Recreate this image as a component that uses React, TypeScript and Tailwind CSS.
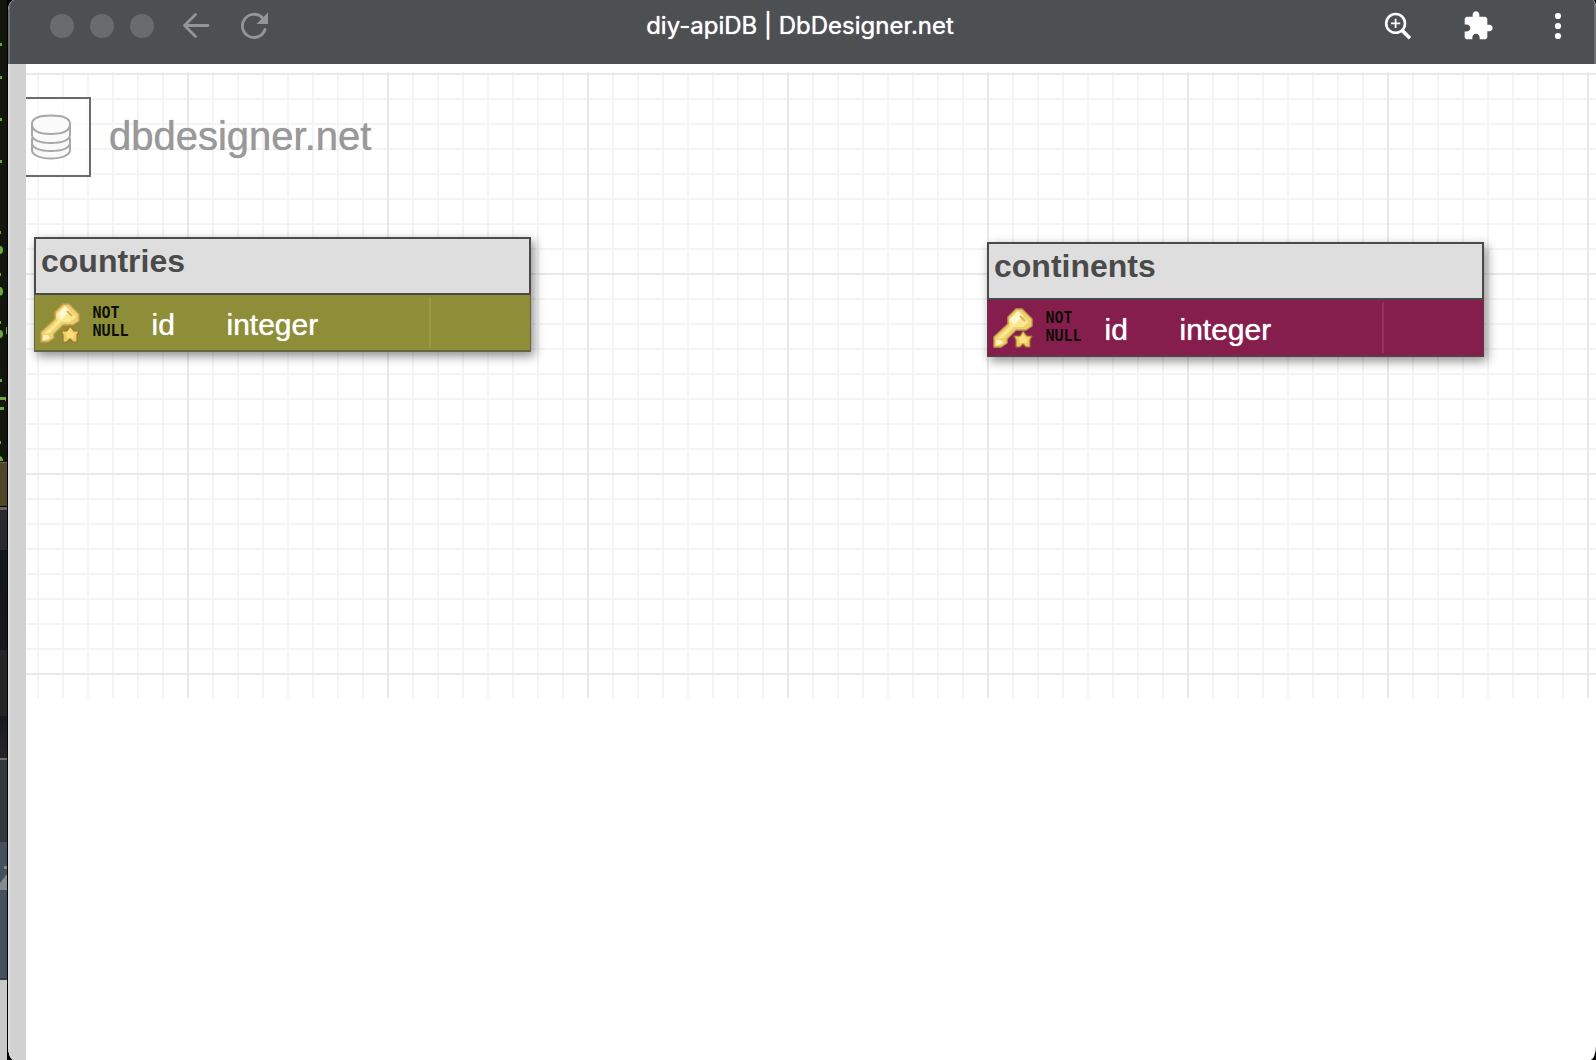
import React from "react";

const SANS = "font-['Liberation_Sans',Arial,sans-serif]";

function BackIcon() {
  return (
    <svg className="size-7" viewBox="0 0 28 28" fill="none" stroke="#939597" strokeWidth="2.8" strokeLinecap="round" aria-hidden="true">
      <path d="M2.5 13.5H26M13.5 2.5L2.5 13.5L13.5 24.5" strokeLinejoin="round" />
    </svg>
  );
}

function ReloadIcon() {
  return (
    <svg className="size-7" viewBox="0 0 28 28" aria-hidden="true">
      <path d="M25 17.500A11.600 11.600 0 1 1 22.500 6" fill="none" stroke="#939597" strokeWidth="2.8" strokeLinecap="round" />
      <path d="M28 0.500V12H16.500Z" fill="#939597" />
    </svg>
  );
}

function ZoomIcon() {
  return (
    <svg className="size-7" viewBox="0 0 28 28" fill="none" stroke="#fff" aria-hidden="true">
      <circle cx="11.6" cy="11.4" r="9.4" strokeWidth="2.6" />
      <path d="M11.600 6.800V16M7 11.400H16.200" strokeWidth="1.8" />
      <path d="M18.300 18.600L26 26.200" strokeWidth="3.6" />
    </svg>
  );
}

function PuzzleIcon() {
  return (
    <svg className="size-8" viewBox="0 0 24 24" fill="#fff" aria-hidden="true">
      <path d="M20.5 11H19V7c0-1.1-.9-2-2-2h-4V3.5C13 2.12 11.88 1 10.5 1S8 2.12 8 3.5V5H4c-1.1 0-1.99.9-1.99 2v3.8H3.5c1.49 0 2.7 1.21 2.7 2.7s-1.21 2.7-2.7 2.7H2V20c0 1.1.9 2 2 2h3.8v-1.5c0-1.49 1.21-2.7 2.7-2.7 1.49 0 2.7 1.21 2.7 2.7V22H17c1.1 0 2-.9 2-2v-4h1.5c1.38 0 2.5-1.12 2.5-2.5S21.88 11 20.5 11z" />
    </svg>
  );
}

function MenuIcon() {
  return (
    <svg className="h-7 w-2" viewBox="0 0 8 28" fill="#fff" aria-hidden="true">
      <circle cx="4" cy="4" r="3.1" />
      <circle cx="4" cy="14" r="3.1" />
      <circle cx="4" cy="24" r="3.1" />
    </svg>
  );
}

function KeyIcon() {
  return (
    <svg className="size-10" viewBox="0 0 40 40" strokeLinejoin="round" aria-hidden="true">
      <path d="M1 29L15 16V9L23 1H29L39 11V18L33 22L23 22L14 31V35L8 39H1Z" fill="#ecd26c" stroke="#c79a50" strokeWidth="1.4" />
      <path d="M16 12L25 3L36 14L30 19L21 19L10 30L4 31L17 18Z" fill="#f9e88f" />
      <path d="M17 11L25 3L30 8L21 17Z" fill="#fdf6cf" />
      <path d="M3 32H8L10 35L5 37H3Z" fill="#fff3b8" />
      <path d="M27 8L32 13" stroke="#dda95a" strokeWidth="2" />
      <path d="M30 23L34 28H39L37 32V39H33L30 36L27 39H23V32L21 28H27Z" fill="#f0cb62" stroke="#9a7530" strokeWidth="1.2" />
      <path d="M30 26L33 30H35L33 35H27L26 30Z" fill="#ffdf7c" />
    </svg>
  );
}

function DatabaseIcon() {
  return (
    <svg className="h-[46px] w-[42px] shrink-0" viewBox="0 0 42 46" fill="#fafafa" stroke="#a8a8a8" strokeWidth="2" aria-hidden="true">
      <path d="M2 30V36C2 41 10 44.500 21 44.500S40 41 40 36V30" />
      <path d="M2 24V29C2 34 10 37 21 37S40 34 40 29V24" />
      <path d="M2 10V21C2 26 10 29 21 29S40 26 40 21V10" />
      <path d="M2 10C2 17 10 20 21 20S40 17 40 10C40 4 32 1.500 21 1.500S2 4 2 10Z" />
    </svg>
  );
}

function DesktopEdge() {
  return (
    <div className="flex w-[7px] shrink-0 flex-col overflow-hidden" aria-hidden="true">
      <div className="h-[462px] shrink-0 bg-[#12160c]">
        <svg className="h-[462px] w-[7px]" viewBox="0 0 7 462" fill="#69a83f">
          <path d="M0 43h2v3H0zM0 76h2v3H0zM0 118h2v3H0zM0 160h2v3H0zM0 231h1v3H0zM0 246q3 0 3 4t-3 4zM0 273h1v3H0zM0 287q3 0 3 4.500t-3 4zM0 321h1v3H0zM6 327h1v7H6zM0 330q3 0 3 4t-3 4zM0 379h2v3H0zM0 397h6v4H5v-1H0zM0 407h4v3H0zM0 441h1v3H0zM0 456q3 1 3 5H0z" />
        </svg>
      </div>
      <div className="h-11 shrink-0 border-t border-[#6b6148] bg-linear-to-b from-[#4d452d] to-[#4e4522]" />
      <div className="h-1 shrink-0 border-t border-black bg-[#626364]" />
      <div className="h-10 shrink-0 bg-[#28292d]" />
      <div className="h-[100px] shrink-0 bg-linear-to-b from-[#10171d] to-[#1a171d]" />
      <div className="h-[66px] shrink-0 bg-[#262526]" />
      <div className="h-[42px] shrink-0 bg-linear-to-b from-[#151a20] to-[#252525]" />
      <div className="h-[84px] shrink-0 border-t-2 border-[#6c7070] bg-[#303a3c]" />
      <div className="flex h-[138px] shrink-0 flex-col justify-start border-b-2 border-[#353e48] bg-[#44505c] pt-6">
        <svg className="h-6 w-[7px]" viewBox="0 0 7 24" fill="#858b90">
          <path d="M4 0h3v3H4zM7 8v16H0v-7z" />
        </svg>
      </div>
      <div className="grow bg-[#c9c9c9]" />
    </div>
  );
}

type Entity = { name: string; place: string; fill: string; divider: string };

const entities: Entity[] = [
  { name: "countries", place: "left-2 top-[173px]", fill: "bg-[#8d8e37]", divider: "bg-[#999b42]" },
  { name: "continents", place: "left-[961px] top-[178px]", fill: "bg-[#861e4d]", divider: "bg-[#93305d]" },
];

function EntityCard({ name, place, fill, divider }: Entity) {
  return (
    <article className={`absolute w-[497px] shadow-[3px_4px_10px_rgba(0,0,0,0.45)] ${place}`}>
      <h2 className="h-[58px] border-2 border-[#4a4a4a] bg-[#dedede] px-[5px] pt-1 text-[32px] leading-9 font-bold text-[#4a4a4a]">
        {name}
      </h2>
      <table className={`h-[57px] w-full table-fixed border-collapse text-[30px] leading-9 text-white ${fill}`}>
        <tbody>
          <tr className="border-x border-b-2 border-[#4a4a4a]/60">
            <td className="w-[58px] pl-[5px]">
              <KeyIcon />
            </td>
            <td className="w-[59px] pb-0.5 font-['DejaVu_Sans_Mono',monospace] text-[15px] leading-[18px] font-bold text-[#0d0d05]">
              NOT
              <br />
              NULL
            </td>
            <td className="w-[75px] pt-1 [text-shadow:0_0_1px_#fff]">id</td>
            <td className="pt-1 [text-shadow:0_0_1px_#fff]">integer</td>
            <td className="w-[102px]">
              <div className={`h-[51px] w-0.5 ${divider}`} />
            </td>
          </tr>
        </tbody>
      </table>
    </article>
  );
}

export default function App() {
  return (
    <div className={`flex min-h-screen bg-black ${SANS}`}>
      <DesktopEdge />
      <div className="ml-px flex min-w-0 grow flex-col overflow-hidden rounded-tl-[6px_10px] rounded-tr-[3px_8px] rounded-br-[6px_14px] rounded-bl-[6px_14px] bg-white">
        <header className="grid h-16 grid-cols-[1fr_auto_1fr] rounded-tl-[6px_10px] rounded-tr-[3px_8px] border-x-2 border-[#6c6f71] bg-[#4d5052] pr-1 pb-3">
          <div className="flex items-center pl-10">
            <div className="flex gap-4">
              <button aria-label="Close" className="size-6 rounded-full bg-[#6a6b6f]" />
              <button aria-label="Minimize" className="size-6 rounded-full bg-[#6a6b6f]" />
              <button aria-label="Zoom window" className="size-6 rounded-full bg-[#6a6b6f]" />
            </div>
            <button aria-label="Back" className="ml-7">
              <BackIcon />
            </button>
            <button aria-label="Reload" className="ml-[30px]">
              <ReloadIcon />
            </button>
          </div>
          <h1 className="self-center font-['Inter',sans-serif] text-2xl text-white [text-shadow:0_0_1px_#ffffff]">diy-apiDB | DbDesigner.net</h1>
          <div className="flex items-center justify-end pr-7">
            <button aria-label="Zoom">
              <ZoomIcon />
            </button>
            <button aria-label="Extensions" className="ml-[50px]">
              <PuzzleIcon />
            </button>
            <button aria-label="Menu" className="ml-[60px]">
              <MenuIcon />
            </button>
          </div>
        </header>
        <div className="flex grow">
          <div className="w-[18px] shrink-0 border-l-2 border-[#dcdcdc] bg-[#d1d1d1]" />
          <main className="min-w-0 grow overflow-hidden">
            <div className="relative pt-2">
              <div className="h-[626px] bg-[linear-gradient(#e9e9e9_2px,transparent_2px),linear-gradient(90deg,#e9e9e9_2px,transparent_2px),linear-gradient(#f4f4f4_2px,transparent_2px),linear-gradient(90deg,#f4f4f4_2px,transparent_2px)] bg-[size:200px_200px,200px_200px,25px_25px,25px_25px] bg-[position:0_1px,161px_0,0_1px,11px_0]" />
              <div className="absolute top-[33px] left-0 flex h-20 items-center">
                <div className="flex h-20 w-[65px] items-center border-2 border-l-0 border-[#6b6b6b] bg-white/60 pl-1">
                  <DatabaseIcon />
                </div>
                <span className="ml-[18px] pb-0.5 text-[40px] leading-[48px] text-[#999] [text-shadow:0_0_1px_#999]">dbdesigner.net</span>
              </div>
              {entities.map((entity) => (
                <EntityCard key={entity.name} {...entity} />
              ))}
            </div>
          </main>
        </div>
      </div>
    </div>
  );
}
